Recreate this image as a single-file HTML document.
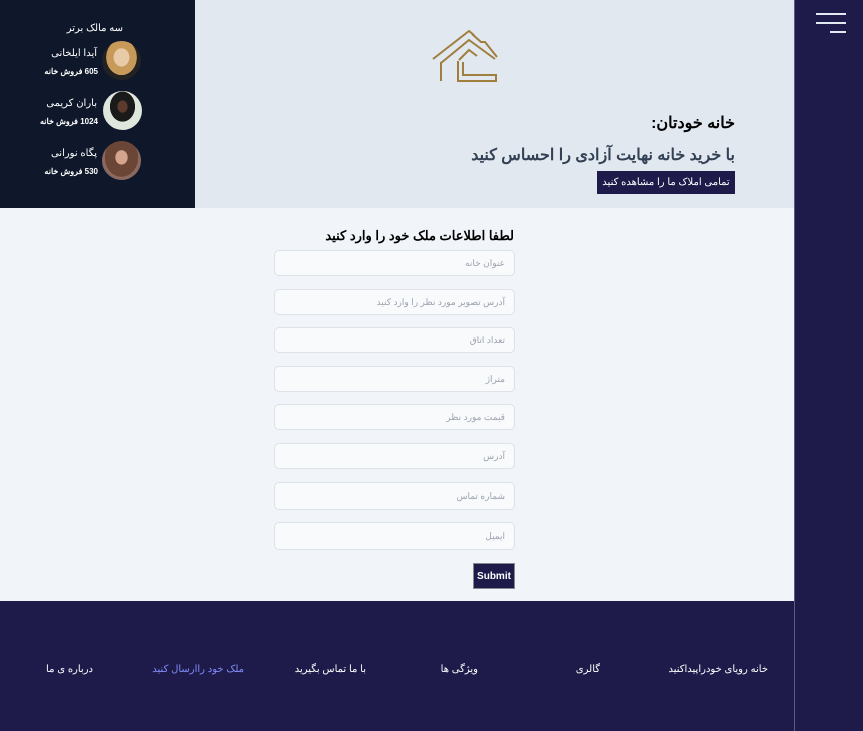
<!DOCTYPE html>
<html><head><meta charset="utf-8"><style>
*{margin:0;padding:0;box-sizing:border-box}
body{width:863px;height:731px;position:relative;overflow:hidden;background:#f1f5f9;font-family:"Liberation Sans","Noto Sans CJK SC",sans-serif;direction:rtl}
.abs{position:absolute}
.lp{left:0;top:0;width:195px;height:208px;background:#0f172a;color:#fff}
.hero{left:195px;top:0;width:599px;height:208px;background:#e2e8f0}
.side{left:794px;top:0;width:69px;height:731px;background:#1e1b4b;border-left:1px solid #5b5a80}
.bar{position:absolute;height:2px;background:#e2e8f0}
.foot{left:0;top:601px;width:794px;height:130px;background:#1e1b4b}
.fl{position:absolute;top:664px;font-size:10px;color:#fff;white-space:nowrap}
.av{position:absolute;width:39px;height:39px;border-radius:50%}
.nm{position:absolute;font-size:10px;white-space:nowrap}
.sl{position:absolute;font-size:8px;white-space:nowrap;font-weight:bold}
.in{position:absolute;left:274px;width:241px;height:26px;background:#f8fafc;border:1px solid #dde2e8;border-radius:5px;font-size:9px;color:#9ca3af;padding:0 9px;line-height:24px;text-align:right}
</style></head><body>
<div class="abs lp">
<div class="abs" style="right:72px;top:23px;font-size:10px">سه مالک برتر</div>
<div class="av" style="left:102px;top:41px;background:radial-gradient(ellipse at 50% 42%,#e8c9a8 0 28%,#c79a5a 29% 55%,#222 56%)"></div>
<div class="nm" style="right:98px;top:48px">آیدا ایلخانی</div>
<div class="sl" style="right:97px;top:67px">605 فروش خانه</div>
<div class="av" style="left:103px;top:91px;background:radial-gradient(ellipse at 50% 40%,#5a3a2a 0 18%,#1a1a1a 19% 45%,#dfe6dc 46%)"></div>
<div class="nm" style="right:98px;top:98px">باران کریمی</div>
<div class="sl" style="right:97px;top:117px">1024 فروش خانه</div>
<div class="av" style="left:102px;top:141px;background:radial-gradient(ellipse at 50% 42%,#d4a48c 0 22%,#6b4536 23% 60%,#8a6a60 61%)"></div>
<div class="nm" style="right:98px;top:148px">پگاه نورانی</div>
<div class="sl" style="right:97px;top:167px">530 فروش خانه</div>
</div>
<div class="abs hero">
<svg class="abs" style="left:230px;top:25px" width="80" height="60" viewBox="0 0 80 60" fill="none" stroke="#a07f3e" stroke-width="2">
<path d="M8 34 L44 6 L49 10"/><path d="M47 9 L56 17 L60 17 L72 32"/>
<path d="M16 38 L44 15 L70 34"/><path d="M16 37 V56"/>
<path d="M34 35 L44 25 L52 31"/><path d="M33 36 V56 H71 V50 H38 V37"/>
</svg>
<div class="abs" style="right:59px;top:113px;font-size:16px;font-weight:bold;color:#000">خانه خودتان:</div>
<div class="abs" style="right:59px;top:145px;font-size:16px;font-weight:bold;color:#334155">با خرید خانه نهایت آزادی را احساس کنید</div>
<div class="abs" style="right:59px;top:171px;width:138px;height:23px;background:#1e1b4b;color:#fff;font-size:10px;line-height:23px;text-align:center">تمامی املاک ما را مشاهده کنید</div>
</div>
<div class="abs side">
<div class="bar" style="left:21px;top:13px;width:30px"></div>
<div class="bar" style="left:21px;top:22px;width:30px"></div>
<div class="bar" style="left:35px;top:31px;width:16px"></div>
</div>
<div class="abs" style="right:349px;top:228px;font-size:13px;font-weight:bold;color:#000">لطفا اطلاعات ملک خود را وارد کنید</div>
<div class="in" style="top:250px">عنوان خانه</div>
<div class="in" style="top:289px">آدرس تصویر مورد نظر را وارد کنید</div>
<div class="in" style="top:327px">تعداد اتاق</div>
<div class="in" style="top:366px">متراژ</div>
<div class="in" style="top:404px">قیمت مورد نظر</div>
<div class="in" style="top:443px">آدرس</div>
<div class="in" style="top:482px;height:28px;line-height:26px">شماره تماس</div>
<div class="in" style="top:522px;height:28px;line-height:26px">ایمیل</div>
<div class="abs" style="left:473px;top:563px;width:42px;height:26px;background:#1e1b4b;color:#fff;font-size:10px;font-weight:bold;line-height:26px;text-align:center;border:1px solid #888">Submit</div>
<div class="abs foot"></div>
<div class="fl" style="right:95px">خانه رویای خودراپیداکنید</div>
<div class="fl" style="right:263px">گالری</div>
<div class="fl" style="right:385px">ویژگی ها</div>
<div class="fl" style="right:497px">با ما تماس بگیرید</div>
<div class="fl" style="right:619px;color:#818cf8">ملک خود راارسال کنید</div>
<div class="fl" style="right:770px">درباره ی ما</div>
</body></html>
